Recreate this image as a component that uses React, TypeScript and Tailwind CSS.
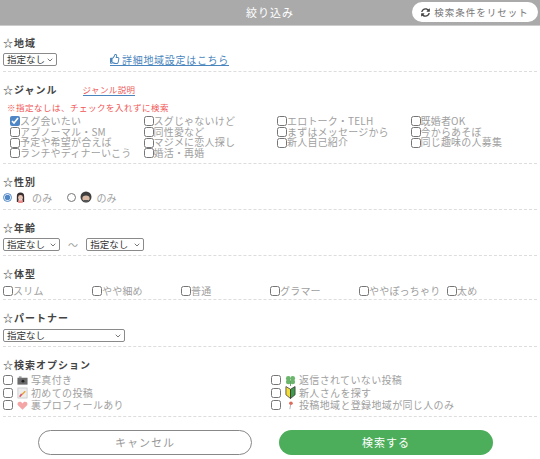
import { FaRegThumbsUp, FaSyncAlt } from "react-icons/fa";
import { ChevronDown } from "lucide-react";

const font = { fontFamily: '"Noto Sans CJK JP", "Liberation Sans", sans-serif' };

const genres = [
  "スグ会いたい", "スグじゃないけど", "エロトーク・TELH", "既婚者OK",
  "アブノーマル・SM", "同性愛など", "まずはメッセージから", "今からあそぼ",
  "予定や希望が合えば", "マジメに恋人探し", "新人自己紹介", "同じ趣味の人募集",
  "ランチやディナーいこう", "婚活・再婚",
];

const bodies = [
  { label: "スリム", w: "w-[89px]" },
  { label: "やや細め", w: "w-[89px]" },
  { label: "普通", w: "w-[89px]" },
  { label: "グラマー", w: "w-[89px]" },
  { label: "ややぽっちゃり", w: "w-[88px]" },
  { label: "太め", w: "w-[40px]" },
];

function Title({ children }: { children: React.ReactNode }) {
  return (
    <h2 className="h-[13px] text-[10px] leading-[13px] font-bold tracking-[1px] text-[#444]">
      <span className="font-normal">☆</span>
      {children}
    </h2>
  );
}

function Select({ className }: { className: string }) {
  return (
    <button className={`h-[13px] pl-[3px] pr-[2px] flex items-center justify-between whitespace-nowrap border border-[#8a8a8a] rounded-[2px] text-[9.500px] leading-[11px] tracking-normal text-[#333] bg-white ${className}`}>
      <span>指定なし</span>
      <ChevronDown className="w-[8px] h-[8px] shrink-0 text-[#333]" strokeWidth={2} />
    </button>
  );
}

function Check({ checked }: { checked?: boolean }) {
  return <input type="checkbox" defaultChecked={checked} className="w-[10px] h-[10px] m-0 shrink-0 accent-[#4f86c6]" />;
}

const Woman = () => (
  <svg viewBox="0 0 12 12" className="w-[11px] h-[11px] shrink-0">
    <path d="M2 11V4.500a4 4 0 0 1 8 0V11H8V6H4v5z" fill="#3a2f2f" />
    <circle cx="6" cy="6" r="2.600" fill="#e8c4b4" />
    <rect x="3.500" y="9" width="5" height="3" fill="#ee8c8c" />
  </svg>
);

const Man = () => (
  <svg viewBox="0 0 12 12" className="w-[12px] h-[12px] shrink-0">
    <circle cx="6" cy="6" r="5.500" fill="#3f3f3f" />
    <ellipse cx="6" cy="7.400" rx="3.600" ry="2.800" fill="#d9b8a4" />
    <path d="M3 9.500a3.500 3.500 0 0 0 6 0L8 9H4z" fill="#555" />
  </svg>
);

const Camera = () => (
  <svg viewBox="0 0 12 12" className="w-[11px] h-[11px]">
    <rect x="0.500" y="3" width="11" height="7.500" fill="#6a6a6a" />
    <rect x="2" y="1.500" width="3" height="2" fill="#999" />
    <circle cx="6.500" cy="6.700" r="1.600" fill="#222" />
  </svg>
);

const Note = () => (
  <svg viewBox="0 0 12 12" className="w-[11px] h-[12px]">
    <rect x="1" y="0.500" width="10" height="11" fill="#eee" stroke="#bbb" strokeWidth="0.700" />
    <path d="M3 10 9 4" stroke="#e8a33a" strokeWidth="1.600" />
    <path d="M3 10 5 7" stroke="#d4548a" strokeWidth="1.600" />
  </svg>
);

const Heart = () => (
  <svg viewBox="0 0 12 12" className="w-[11px] h-[11px]">
    <path d="M6 10.500 1 5.700C-.2 3.600 1.400 2 3 2c1.400 0 2.300.7 3 1.700C6.700 2.700 7.600 2 9 2c1.600 0 3.200 1.600 2 3.700z" fill="#f4a6a6" />
  </svg>
);

const Clover = () => (
  <svg viewBox="0 0 12 12" className="w-[11px] h-[11px]">
    <circle cx="3.600" cy="3.800" r="2.600" fill="#6cb56c" />
    <circle cx="8.400" cy="3.800" r="2.600" fill="#6cb56c" />
    <circle cx="3.600" cy="7.600" r="2.600" fill="#6cb56c" />
    <circle cx="8.400" cy="7.600" r="2.600" fill="#6cb56c" />
    <path d="M6 6v6" stroke="#5aa05a" strokeWidth="1" />
  </svg>
);

const Beginner = () => (
  <svg viewBox="0 0 12 14" className="w-[11px] h-[13px]">
    <path d="M6 3.500 1 .5v9L6 13.500z" fill="#f2dc3c" stroke="#333" strokeWidth="0.800" />
    <path d="M6 3.500l5-3v9l-5 4z" fill="#3f9b4a" stroke="#333" strokeWidth="0.800" />
  </svg>
);

const Pin = () => (
  <svg viewBox="0 0 12 12" className="w-[11px] h-[11px]">
    <circle cx="6.500" cy="3.500" r="2" fill="#e06a5a" />
    <path d="M6.200 5 5.300 10" stroke="#999" strokeWidth="0.800" />
  </svg>
);

const optionsLeft = [
  { icon: <Camera />, label: "写真付き" },
  { icon: <Note />, label: "初めての投稿" },
  { icon: <Heart />, label: "裏プロフィールあり" },
];

const optionsRight = [
  { icon: <Clover />, label: "返信されていない投稿" },
  { icon: <Beginner />, label: "新人さんを探す" },
  { icon: <Pin />, label: "投稿地域と登録地域が同じ人のみ" },
];

function Option({ icon, label }: { icon: React.ReactNode; label: string }) {
  return (
    <label className="flex items-center h-[12.500px] leading-[12.500px]">
      <Check />
      <span className="w-[18px] flex justify-center shrink-0">{icon}</span>
      <span>{label}</span>
    </label>
  );
}

export default function App() {
  return (
    <div style={font} className="w-[540px] h-[459px] overflow-hidden bg-white text-[10px] leading-[11px] tracking-[0.2px] text-[#a0a0a0]">
      <header className="relative h-[26px] bg-[#aaaaaa] border-b border-[#ccc] flex items-center justify-center text-white text-[11px] tracking-[1px]">
        絞り込み
        <button className="absolute right-[2px] top-[2px] w-[126px] h-[20px] bg-white rounded-full flex items-center justify-center gap-[4px] text-[9.500px] tracking-[1px] text-[#777]">
          <FaSyncAlt className="w-[9px] h-[9px] text-[#444]" />
          検索条件をリセット
        </button>
      </header>

      <section className="mx-[3px] h-[46px] pt-[10px] border-b border-dashed border-[#ddd]">
        <Title>地域</Title>
        <div className="flex items-center mt-[4px]">
          <Select className="w-[54px]" />
          <a className="ml-[53px] flex items-center gap-[2px] text-[10px] leading-[11px] tracking-[0.7px] text-[#4a86bd] border-b border-[#4a86bd]">
            <FaRegThumbsUp className="w-[10px] h-[10px]" />
            詳細地域設定はこちら
          </a>
        </div>
      </section>

      <section className="mx-[3px] h-[92px] pt-[11px] border-b border-dashed border-[#ddd]">
        <div className="flex items-center">
          <Title>ジャンル</Title>
          <a className="ml-[25px] text-[8.500px] leading-[11px] tracking-[0.4px] text-[#ee5a5a] border-b border-[#4a86bd]">ジャンル説明</a>
        </div>
        <p className="mt-[6px] ml-[4px] text-[8.500px] leading-[11px] tracking-[0.5px] text-[#f25555]">※指定なしは、チェックを入れずに検索</p>
        <div className="mt-[3px] ml-[7px] grid grid-cols-[133.500px_133.500px_133.500px_1fr]">
          {genres.map((g, i) => (
            <label key={g} className="flex items-center h-[10.700px] leading-[10.700px] whitespace-nowrap">
              <Check checked={i === 0} />
              <span>{g}</span>
            </label>
          ))}
        </div>
      </section>

      <section className="mx-[3px] h-[46px] pt-[11px] border-b border-dashed border-[#ddd]">
        <Title>性別</Title>
        <div className="flex items-center mt-[3px] h-[12px]">
          <input type="radio" name="sex" defaultChecked className="w-[9px] h-[9px] m-0 accent-[#4f86c6]" />
          <span className="ml-[3px]"><Woman /></span>
          <span className="ml-[6px]">のみ</span>
          <input type="radio" name="sex" className="ml-[15px] w-[9px] h-[9px] m-0" />
          <span className="ml-[4px]"><Man /></span>
          <span className="ml-[4px]">のみ</span>
        </div>
      </section>

      <section className="mx-[3px] h-[46px] pt-[11px] border-b border-dashed border-[#ddd]">
        <Title>年齢</Title>
        <div className="flex items-center mt-[4px]">
          <Select className="w-[57px]" />
          <span className="mx-[8px]">～</span>
          <Select className="w-[58px]" />
        </div>
      </section>

      <section className="mx-[3px] h-[44px] pt-[11px] border-b border-dashed border-[#ddd]">
        <Title>体型</Title>
        <div className="flex items-center mt-[5px]">
          {bodies.map((b) => (
            <label key={b.label} className={`flex items-center whitespace-nowrap ${b.w}`}>
              <Check />
              <span>{b.label}</span>
            </label>
          ))}
        </div>
      </section>

      <section className="mx-[3px] h-[47px] pt-[11px] border-b border-dashed border-[#ddd]">
        <Title>パートナー</Title>
        <Select className="w-[122px] mt-[5px]" />
      </section>

      <section className="mx-[3px] h-[70px] pt-[11px] border-b border-dashed border-[#ddd]">
        <Title>検索オプション</Title>
        <div className="mt-[3px] grid grid-cols-[268px_1fr] tracking-[0.35px]">
          <div>
            {optionsLeft.map((o) => <Option key={o.label} {...o} />)}
          </div>
          <div>
            {optionsRight.map((o) => <Option key={o.label} {...o} />)}
          </div>
        </div>
      </section>

      <div className="flex pl-[38px] gap-[27px] mt-[13px]">
        <button className="w-[214px] h-[25px] rounded-full border-[1.500px] border-[#888] bg-white text-[11px] tracking-[1px] text-[#999]">キャンセル</button>
        <button className="w-[214px] h-[25px] rounded-full bg-[#4cae5b] text-[11px] tracking-[1px] text-white">検索する</button>
      </div>
    </div>
  );
}
